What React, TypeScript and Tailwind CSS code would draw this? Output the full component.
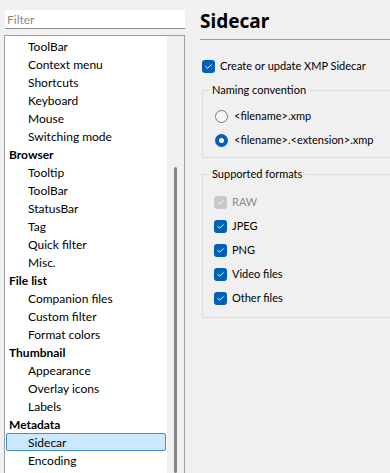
import React from "react";

type Node = { label: string; level: 0 | 1; selected?: boolean };

const tree: Node[] = [
  { label: "ToolBar", level: 1 },
  { label: "Context menu", level: 1 },
  { label: "Shortcuts", level: 1 },
  { label: "Keyboard", level: 1 },
  { label: "Mouse", level: 1 },
  { label: "Switching mode", level: 1 },
  { label: "Browser", level: 0 },
  { label: "Tooltip", level: 1 },
  { label: "ToolBar", level: 1 },
  { label: "StatusBar", level: 1 },
  { label: "Tag", level: 1 },
  { label: "Quick filter", level: 1 },
  { label: "Misc.", level: 1 },
  { label: "File list", level: 0 },
  { label: "Companion files", level: 1 },
  { label: "Custom filter", level: 1 },
  { label: "Format colors", level: 1 },
  { label: "Thumbnail", level: 0 },
  { label: "Appearance", level: 1 },
  { label: "Overlay icons", level: 1 },
  { label: "Labels", level: 1 },
  { label: "Metadata", level: 0 },
  { label: "Sidecar", level: 1, selected: true },
  { label: "Encoding", level: 1 },
];

function CheckBox({ label, disabled = false }: { label: string; disabled?: boolean }) {
  return (
    <div className="flex items-center h-[18px]">
      <span
        className={`w-[13px] h-[13px] rounded-[3px] flex items-center justify-center ${
          disabled ? "bg-[#c8c8c8]" : "bg-[#005fb8]"
        }`}
      >
        <svg width="9" height="9" viewBox="0 0 9 9" fill="none">
          <path d="M1.8 4.6 L3.6 6.3 L7.2 2.7" stroke="white" strokeWidth="1" strokeLinecap="round" strokeLinejoin="round" />
        </svg>
      </span>
      <span className={`ml-[5px] leading-[18px] ${disabled ? "text-[#8c8c8c]" : ""}`}>{label}</span>
    </div>
  );
}

function Radio({ label, checked = false }: { label: string; checked?: boolean }) {
  return (
    <div className="flex items-center h-[18px]">
      {checked ? (
        <span className="w-[13px] h-[13px] rounded-full bg-[#005fb8] flex items-center justify-center">
          <span className="w-[5px] h-[5px] rounded-full bg-white" />
        </span>
      ) : (
        <span className="w-[13px] h-[13px] rounded-full border border-[#7a7a7a] bg-[#f6f6f6]" />
      )}
      <span className="ml-[6px] leading-[18px]">{label}</span>
    </div>
  );
}

export default function App() {
  return (
    <div className="w-[390px] h-[473px] overflow-hidden bg-[#f0f0f0] flex text-black font-['Lato',sans-serif]">
      {/* left: filter + tree */}
      <div className="w-[185px] shrink-0 pl-[4px] flex flex-col text-[12px]">
        <input
          readOnly
          placeholder="Filter"
          className="mt-[10px] ml-[1px] h-[19px] w-[180px] bg-white border-b border-[#8a8a8a] pl-[2px] pt-[1px] outline-none placeholder:text-[#8a8a8a]"
        />
        <div className="mt-[6px] flex-1 border border-[#a0a0a0] border-b-0 flex">
          <div className="w-[162px] bg-white pt-[1px]">
            {tree.map((n, i) => (
              <div
                key={i}
                className={`mx-[1px] h-[18px] leading-[17px] border rounded-[2px] ${
                  n.selected ? "bg-[#cce8ff] border-[#3d8fd6]" : "border-transparent"
                } ${n.level === 0 ? "pl-[2px] font-bold" : "pl-[21px]"}`}
              >
                {n.label}
              </div>
            ))}
          </div>
          <div className="w-[17px] pl-[7px] pt-[131px]">
            <div className="w-[3px] h-full rounded-full bg-[#858585]" />
          </div>
        </div>
      </div>

      {/* right: page */}
      <div className="w-[230px] shrink-0 pl-[15px] text-[11px]">
        <div className="h-[40px] pt-[9px] border-b border-[#a0a0a0]">
          <div className="text-[19px] leading-[24px] font-bold font-['Noto_Sans',sans-serif]">Sidecar</div>
        </div>
        <div className="mt-[17px] ml-[2px]">
          <CheckBox label="Create or update XMP Sidecar" />
        </div>

        <fieldset className="mt-[6px] ml-[2px] border border-[#dcdcdc] pl-[12px] pt-[8px] pb-[8px]">
          <legend className="ml-[-6px] px-[3px] leading-[18px]">Naming convention</legend>
          <div className="flex flex-col gap-[6px]">
            <Radio label="<filename>.xmp" />
            <Radio label="<filename>.<extension>.xmp" checked />
          </div>
        </fieldset>

        <fieldset className="mt-[7px] ml-[2px] border border-[#dcdcdc] pl-[11px] pt-[10px] pb-[10px]">
          <legend className="ml-[-5px] px-[3px] leading-[18px]">Supported formats</legend>
          <div className="flex flex-col gap-[6px]">
            <CheckBox label="RAW" disabled />
            <CheckBox label="JPEG" />
            <CheckBox label="PNG" />
            <CheckBox label="Video files" />
            <CheckBox label="Other files" />
          </div>
        </fieldset>
      </div>
    </div>
  );
}
